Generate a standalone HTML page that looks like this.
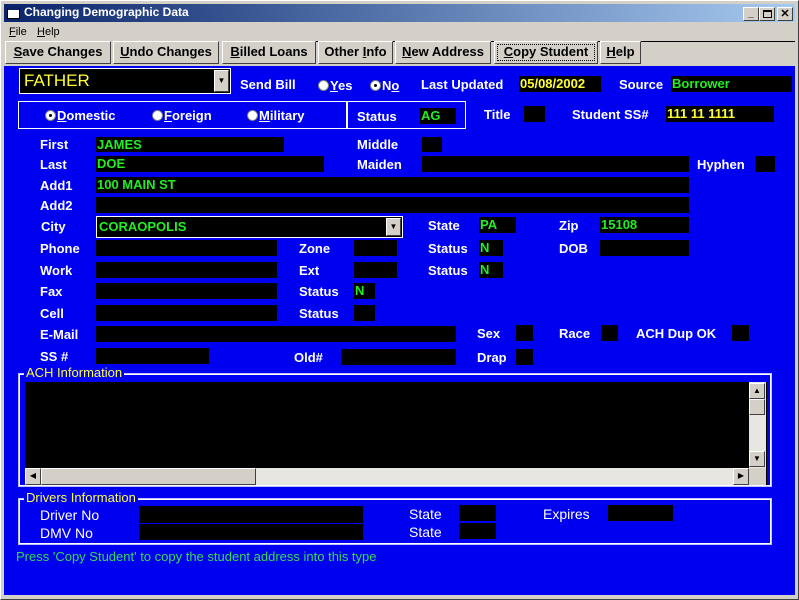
<!DOCTYPE html>
<html><head><style>
*{margin:0;padding:0;box-sizing:border-box}
body{width:799px;height:600px;overflow:hidden;background:#d4d0c8;font-family:"Liberation Sans",Arial,sans-serif;position:relative}
.a{position:absolute}
.l{position:absolute;color:#fff;font-weight:bold;font-size:13px;white-space:nowrap}
.b{position:absolute;background:#000;color:#22ee22;font-weight:bold;font-size:13px;padding-left:1px;line-height:15px;white-space:nowrap;overflow:hidden}
.y{color:#ffff33}
.btn{position:absolute;top:41px;height:23px;background:#d4d0c8;border:1px solid;border-color:#fff #404040 #404040 #fff;font-weight:bold;font-size:13px;line-height:20px;text-align:center;color:#000}
.r{display:inline-block;width:11px;height:11px;border-radius:50%;background:#fff;border:1px solid #808080;vertical-align:-1px;margin-right:1px;position:relative}
.r.on::after{content:"";position:absolute;left:3px;top:3px;width:3px;height:3px;background:#000;border-radius:50%}
.fr{position:absolute;border:1px solid #c0c0ff;box-shadow:inset 0 0 0 1px #fff}
.flab{position:absolute;background:#0000f0;color:#ffff44;font-size:13px;padding:0 2px;line-height:13px}
.sb{position:absolute;background:#d4d0c8;border:1px solid;border-color:#fff #404040 #404040 #fff;font-size:8px;text-align:center;line-height:14px}
</style></head><body>
<div class="a" style="left:0;top:0;width:799px;height:600px;border:1px solid;border-color:#fff #404040 #404040 #fff"></div>
<div class="a" style="left:4px;top:4px;width:791px;height:18px;background:linear-gradient(90deg,#0a246a,#a6caf0)"></div>
<div class="a" style="left:7px;top:7px;width:13px;height:12px;background:#fff;border:1px solid #000;border-top:3px solid #0a246a"></div>
<div class="a" style="left:24px;top:5px;color:#fff;font-weight:bold;font-size:12px">Changing Demographic Data</div>
<div class="a" style="left:743px;top:7px;width:16px;height:14px;background:#d4d0c8;border:1px solid;border-color:#fff #404040 #404040 #fff;font-size:10px;text-align:center;line-height:12px;font-weight:bold">_</div>
<div class="a" style="left:759px;top:7px;width:16px;height:14px;background:#d4d0c8;border:1px solid;border-color:#fff #404040 #404040 #fff"><div class="a" style="left:3px;top:2px;width:9px;height:8px;border:1px solid #000;border-top-width:2px"></div></div>
<div class="a" style="left:777px;top:7px;width:16px;height:14px;background:#d4d0c8;border:1px solid;border-color:#fff #404040 #404040 #fff;font-size:11px;text-align:center;line-height:12px;font-weight:bold">✕</div>
<div class="a" style="left:9px;top:26px;font-size:11px"><u>F</u>ile</div>
<div class="a" style="left:37px;top:26px;font-size:11px"><u>H</u>elp</div>
<div class="a" style="left:242px;top:41px;width:553px;height:1px;background:#000"></div>
<div class="btn" style="left:5px;width:106px"><u>S</u>ave Changes</div>
<div class="btn" style="left:113px;width:106px"><u>U</u>ndo Changes</div>
<div class="btn" style="left:222px;width:94px"><u>B</u>illed Loans</div>
<div class="btn" style="left:318px;width:75px">Other <u>I</u>nfo</div>
<div class="btn" style="left:395px;width:96px"><u>N</u>ew Address</div>
<div class="btn" style="left:494px;width:104px;outline:1px dotted #000;outline-offset:-4px"><u>C</u>opy Student</div>
<div class="btn" style="left:600px;width:41px"><u>H</u>elp</div>
<div class="a" style="left:4px;top:66px;width:791px;height:529px;background:#0000f0"></div>

<div class="a" style="left:19px;top:68px;width:212px;height:26px;background:#000;border:1px solid #fff;color:#ffff33;font-size:17px;line-height:24px;padding-left:4px">FATHER</div>
<div class="sb" style="left:214px;top:70px;width:15px;height:22px;line-height:20px">▼</div>
<div class="l" style="left:240px;top:77px">Send Bill</div>
<div class="l" style="left:318px;top:78px"><span class="r"></span><u>Y</u>es</div>
<div class="l" style="left:370px;top:78px"><span class="r on"></span>N<u>o</u></div>
<div class="l" style="left:421px;top:77px">Last Updated</div>
<div class="b y" style="left:519px;top:76px;width:82px;height:16px">05/08/2002</div>
<div class="l" style="left:619px;top:77px">Source</div>
<div class="b" style="left:671px;top:76px;width:121px;height:16px">Borrower</div>

<div class="a" style="left:18px;top:101px;width:330px;height:28px;border:1px solid #fff"></div>
<div class="a" style="left:346px;top:101px;width:120px;height:28px;border:1px solid #fff"></div>
<div class="l" style="left:45px;top:108px"><span class="r on"></span><u>D</u>omestic</div>
<div class="l" style="left:152px;top:108px"><span class="r"></span><u>F</u>oreign</div>
<div class="l" style="left:247px;top:108px"><span class="r"></span><u>M</u>ilitary</div>
<div class="l" style="left:357px;top:109px">Status</div>
<div class="b" style="left:420px;top:108px;width:36px;height:16px">AG</div>
<div class="l" style="left:484px;top:107px">Title</div>
<div class="b" style="left:524px;top:106px;width:21px;height:16px"></div>
<div class="l" style="left:572px;top:107px">Student SS#</div>
<div class="b y" style="left:666px;top:106px;width:108px;height:16px">111 11 1111</div>

<div class="l" style="left:40px;top:137px">First</div>
<div class="b" style="left:96px;top:137px;width:188px;height:15px">JAMES</div>
<div class="l" style="left:357px;top:137px">Middle</div>
<div class="b" style="left:422px;top:137px;width:20px;height:15px"></div>
<div class="l" style="left:40px;top:157px">Last</div>
<div class="b" style="left:96px;top:156px;width:228px;height:16px">DOE</div>
<div class="l" style="left:357px;top:157px">Maiden</div>
<div class="b" style="left:422px;top:156px;width:267px;height:16px"></div>
<div class="l" style="left:697px;top:157px">Hyphen</div>
<div class="b" style="left:755px;top:156px;width:20px;height:16px"></div>
<div class="l" style="left:40px;top:178px">Add1</div>
<div class="b" style="left:96px;top:177px;width:593px;height:16px">100 MAIN ST</div>
<div class="l" style="left:40px;top:198px">Add2</div>
<div class="b" style="left:96px;top:197px;width:593px;height:16px"></div>
<div class="l" style="left:41px;top:219px">City</div>
<div class="b" style="left:96px;top:216px;width:307px;height:22px;border:1px solid #fff;line-height:19px;padding-left:2px">CORAOPOLIS</div>
<div class="sb" style="left:386px;top:218px;width:15px;height:18px;line-height:16px">▼</div>
<div class="l" style="left:428px;top:218px">State</div>
<div class="b" style="left:479px;top:217px;width:37px;height:16px">PA</div>
<div class="l" style="left:559px;top:218px">Zip</div>
<div class="b" style="left:600px;top:217px;width:89px;height:16px">15108</div>
<div class="l" style="left:40px;top:241px">Phone</div>
<div class="b" style="left:96px;top:240px;width:181px;height:16px"></div>
<div class="l" style="left:299px;top:241px">Zone</div>
<div class="b" style="left:354px;top:240px;width:43px;height:16px"></div>
<div class="l" style="left:428px;top:241px">Status</div>
<div class="b" style="left:479px;top:240px;width:24px;height:16px">N</div>
<div class="l" style="left:559px;top:241px">DOB</div>
<div class="b" style="left:600px;top:240px;width:89px;height:16px"></div>
<div class="l" style="left:40px;top:263px">Work</div>
<div class="b" style="left:96px;top:262px;width:181px;height:16px"></div>
<div class="l" style="left:299px;top:263px">Ext</div>
<div class="b" style="left:354px;top:262px;width:43px;height:16px"></div>
<div class="l" style="left:428px;top:263px">Status</div>
<div class="b" style="left:479px;top:262px;width:24px;height:16px">N</div>
<div class="l" style="left:40px;top:284px">Fax</div>
<div class="b" style="left:96px;top:283px;width:181px;height:16px"></div>
<div class="l" style="left:299px;top:284px">Status</div>
<div class="b" style="left:354px;top:283px;width:21px;height:16px">N</div>
<div class="l" style="left:40px;top:306px">Cell</div>
<div class="b" style="left:96px;top:305px;width:181px;height:16px"></div>
<div class="l" style="left:299px;top:306px">Status</div>
<div class="b" style="left:354px;top:305px;width:21px;height:16px"></div>
<div class="l" style="left:40px;top:327px">E-Mail</div>
<div class="b" style="left:96px;top:326px;width:360px;height:16px"></div>
<div class="l" style="left:477px;top:326px">Sex</div>
<div class="b" style="left:516px;top:325px;width:17px;height:16px"></div>
<div class="l" style="left:559px;top:326px">Race</div>
<div class="b" style="left:601px;top:325px;width:17px;height:16px"></div>
<div class="l" style="left:636px;top:326px">ACH Dup OK</div>
<div class="b" style="left:732px;top:325px;width:17px;height:16px"></div>
<div class="l" style="left:40px;top:349px">SS #</div>
<div class="b" style="left:96px;top:348px;width:113px;height:16px"></div>
<div class="l" style="left:294px;top:350px">Old#</div>
<div class="b" style="left:341px;top:349px;width:115px;height:16px"></div>
<div class="l" style="left:477px;top:350px">Drap</div>
<div class="b" style="left:516px;top:349px;width:17px;height:16px"></div>

<div class="fr" style="left:18px;top:373px;width:754px;height:114px"></div>
<div class="flab" style="left:24px;top:366px">ACH Information</div>
<div class="a" style="left:25px;top:382px;width:742px;height:103px;background:#000"></div>
<div class="a" style="left:749px;top:382px;width:17px;height:86px;background:#e8e6e0"></div>
<div class="sb" style="left:749px;top:383px;width:16px;height:16px">▲</div>
<div class="sb" style="left:749px;top:399px;width:16px;height:16px"></div>
<div class="sb" style="left:749px;top:451px;width:16px;height:16px">▼</div>
<div class="a" style="left:25px;top:468px;width:724px;height:17px;background:#e8e6e0"></div>
<div class="sb" style="left:25px;top:468px;width:16px;height:17px">◀</div>
<div class="sb" style="left:41px;top:468px;width:215px;height:17px"></div>
<div class="sb" style="left:733px;top:468px;width:16px;height:17px">▶</div>
<div class="a" style="left:749px;top:468px;width:17px;height:17px;background:#d4d0c8"></div>

<div class="fr" style="left:18px;top:498px;width:754px;height:47px"></div>
<div class="flab" style="left:24px;top:491px">Drivers Information</div>
<div class="l" style="left:40px;top:507px;font-weight:normal;font-size:14px">Driver No</div>
<div class="b" style="left:139px;top:506px;width:224px;height:17px"></div>
<div class="l" style="left:409px;top:506px;font-weight:normal;font-size:14px">State</div>
<div class="b" style="left:459px;top:505px;width:37px;height:16px"></div>
<div class="l" style="left:543px;top:506px;font-weight:normal;font-size:14px">Expires</div>
<div class="b" style="left:608px;top:505px;width:65px;height:16px"></div>
<div class="l" style="left:40px;top:525px;font-weight:normal;font-size:14px">DMV No</div>
<div class="b" style="left:139px;top:524px;width:224px;height:16px"></div>
<div class="l" style="left:409px;top:524px;font-weight:normal;font-size:14px">State</div>
<div class="b" style="left:459px;top:523px;width:37px;height:16px"></div>
<div class="a" style="left:16px;top:549px;color:#33dd55;font-size:13px">Press 'Copy Student' to copy the student address into this type</div>
</body></html>
